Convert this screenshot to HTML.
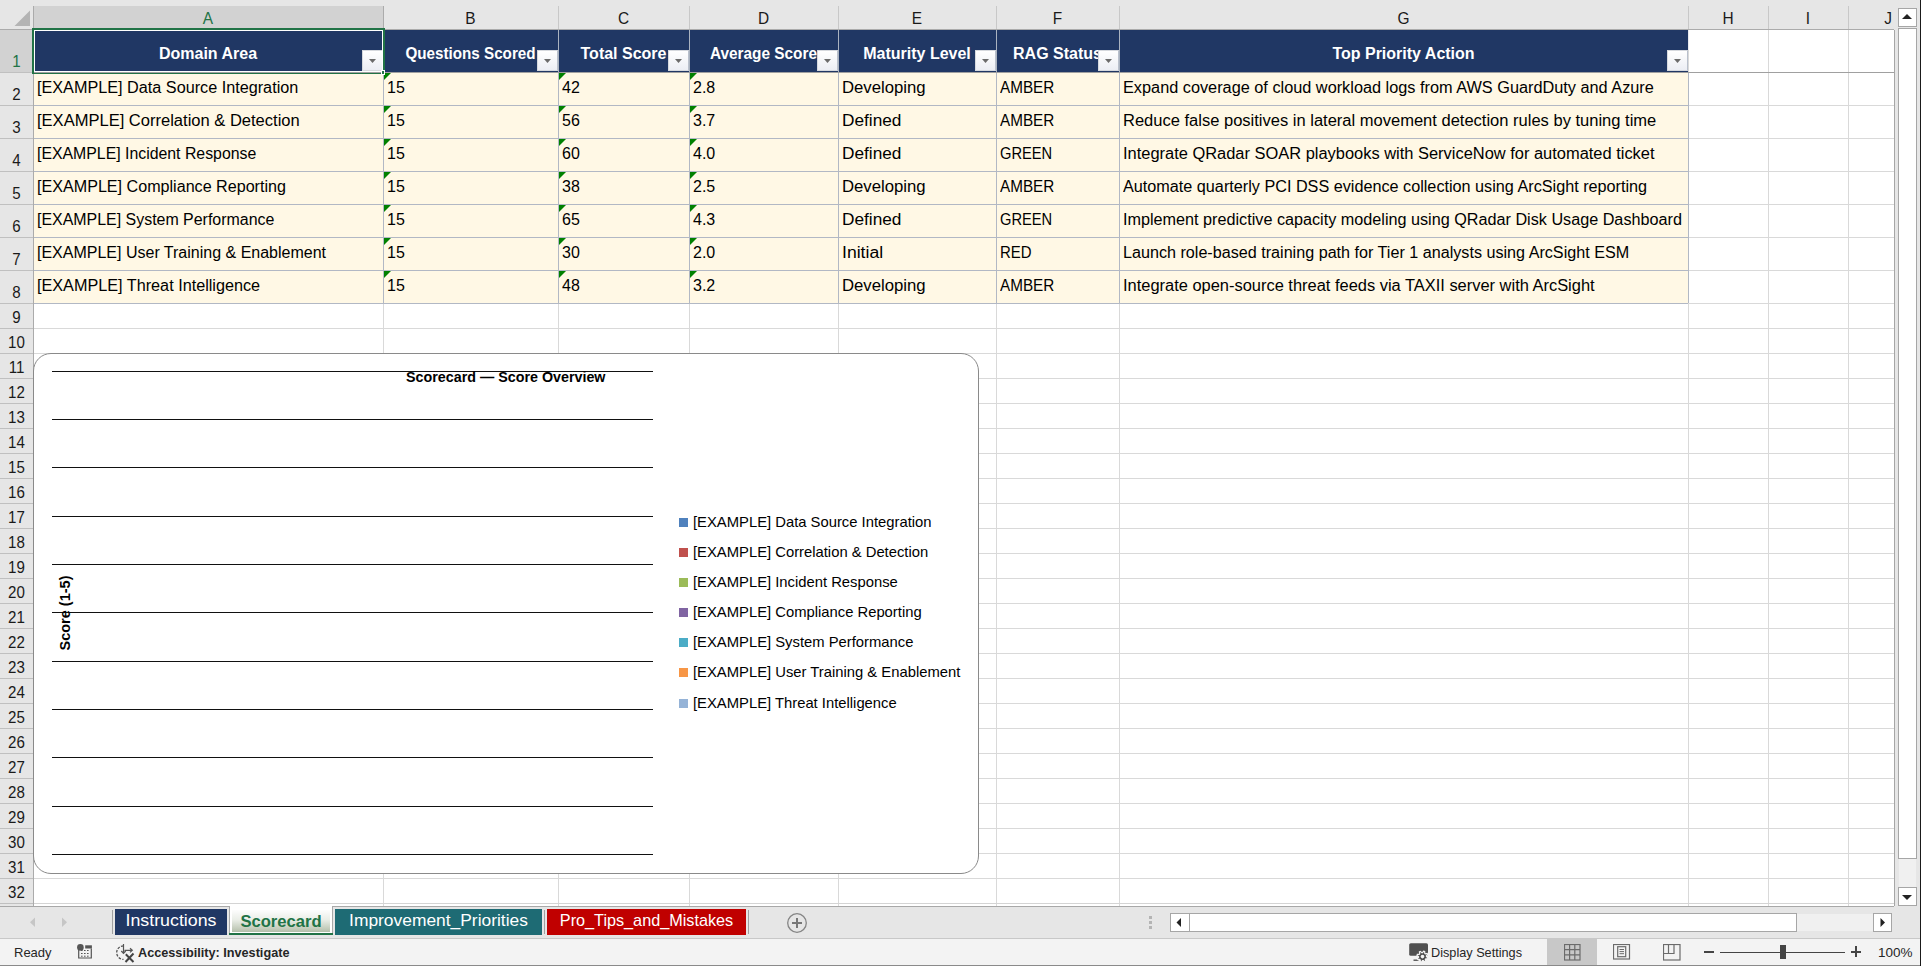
<!DOCTYPE html><html><head><meta charset="utf-8"><style>
*{margin:0;padding:0;box-sizing:border-box}
html,body{width:1921px;height:966px;overflow:hidden;background:#fff;font-family:"Liberation Sans", sans-serif;}
.a{position:absolute}
.t{position:absolute;white-space:pre;line-height:16px;}
</style></head><body>
<div class="a" style="left:383px;top:30px;width:1px;height:876px;background:#d9d9d9;"></div>
<div class="a" style="left:558px;top:30px;width:1px;height:876px;background:#d9d9d9;"></div>
<div class="a" style="left:689px;top:30px;width:1px;height:876px;background:#d9d9d9;"></div>
<div class="a" style="left:838px;top:30px;width:1px;height:876px;background:#d9d9d9;"></div>
<div class="a" style="left:996px;top:30px;width:1px;height:876px;background:#d9d9d9;"></div>
<div class="a" style="left:1119px;top:30px;width:1px;height:876px;background:#d9d9d9;"></div>
<div class="a" style="left:1688px;top:30px;width:1px;height:876px;background:#d9d9d9;"></div>
<div class="a" style="left:1768px;top:30px;width:1px;height:876px;background:#d9d9d9;"></div>
<div class="a" style="left:1848px;top:30px;width:1px;height:876px;background:#d9d9d9;"></div>
<div class="a" style="left:1894px;top:30px;width:1px;height:876px;background:#d9d9d9;"></div>
<div class="a" style="left:34px;top:105px;width:1860px;height:1px;background:#d9d9d9;"></div>
<div class="a" style="left:34px;top:138px;width:1860px;height:1px;background:#d9d9d9;"></div>
<div class="a" style="left:34px;top:171px;width:1860px;height:1px;background:#d9d9d9;"></div>
<div class="a" style="left:34px;top:204px;width:1860px;height:1px;background:#d9d9d9;"></div>
<div class="a" style="left:34px;top:237px;width:1860px;height:1px;background:#d9d9d9;"></div>
<div class="a" style="left:34px;top:270px;width:1860px;height:1px;background:#d9d9d9;"></div>
<div class="a" style="left:34px;top:303px;width:1860px;height:1px;background:#d9d9d9;"></div>
<div class="a" style="left:34px;top:328px;width:1860px;height:1px;background:#d9d9d9;"></div>
<div class="a" style="left:34px;top:353px;width:1860px;height:1px;background:#d9d9d9;"></div>
<div class="a" style="left:34px;top:378px;width:1860px;height:1px;background:#d9d9d9;"></div>
<div class="a" style="left:34px;top:403px;width:1860px;height:1px;background:#d9d9d9;"></div>
<div class="a" style="left:34px;top:428px;width:1860px;height:1px;background:#d9d9d9;"></div>
<div class="a" style="left:34px;top:453px;width:1860px;height:1px;background:#d9d9d9;"></div>
<div class="a" style="left:34px;top:478px;width:1860px;height:1px;background:#d9d9d9;"></div>
<div class="a" style="left:34px;top:503px;width:1860px;height:1px;background:#d9d9d9;"></div>
<div class="a" style="left:34px;top:528px;width:1860px;height:1px;background:#d9d9d9;"></div>
<div class="a" style="left:34px;top:553px;width:1860px;height:1px;background:#d9d9d9;"></div>
<div class="a" style="left:34px;top:578px;width:1860px;height:1px;background:#d9d9d9;"></div>
<div class="a" style="left:34px;top:603px;width:1860px;height:1px;background:#d9d9d9;"></div>
<div class="a" style="left:34px;top:628px;width:1860px;height:1px;background:#d9d9d9;"></div>
<div class="a" style="left:34px;top:653px;width:1860px;height:1px;background:#d9d9d9;"></div>
<div class="a" style="left:34px;top:678px;width:1860px;height:1px;background:#d9d9d9;"></div>
<div class="a" style="left:34px;top:703px;width:1860px;height:1px;background:#d9d9d9;"></div>
<div class="a" style="left:34px;top:728px;width:1860px;height:1px;background:#d9d9d9;"></div>
<div class="a" style="left:34px;top:753px;width:1860px;height:1px;background:#d9d9d9;"></div>
<div class="a" style="left:34px;top:778px;width:1860px;height:1px;background:#d9d9d9;"></div>
<div class="a" style="left:34px;top:803px;width:1860px;height:1px;background:#d9d9d9;"></div>
<div class="a" style="left:34px;top:828px;width:1860px;height:1px;background:#d9d9d9;"></div>
<div class="a" style="left:34px;top:853px;width:1860px;height:1px;background:#d9d9d9;"></div>
<div class="a" style="left:34px;top:878px;width:1860px;height:1px;background:#d9d9d9;"></div>
<div class="a" style="left:34px;top:903px;width:1860px;height:1px;background:#d9d9d9;"></div>
<div class="a" style="left:0px;top:0px;width:1894px;height:29px;background:#e6e6e6;"></div>
<div class="a" style="left:34px;top:6px;width:349px;height:23px;background:#d2d2d2;"></div>
<svg class="a" style="left:0;top:0" width="33" height="29"><polygon points="14.5,26 30,26 30,10.5" fill="#b4b4b4"/></svg>
<div class="a" style="left:383px;top:6px;width:1px;height:23px;background:#c8c8c8;"></div>
<div class="a" style="left:558px;top:6px;width:1px;height:23px;background:#c8c8c8;"></div>
<div class="a" style="left:689px;top:6px;width:1px;height:23px;background:#c8c8c8;"></div>
<div class="a" style="left:838px;top:6px;width:1px;height:23px;background:#c8c8c8;"></div>
<div class="a" style="left:996px;top:6px;width:1px;height:23px;background:#c8c8c8;"></div>
<div class="a" style="left:1119px;top:6px;width:1px;height:23px;background:#c8c8c8;"></div>
<div class="a" style="left:1688px;top:6px;width:1px;height:23px;background:#c8c8c8;"></div>
<div class="a" style="left:1768px;top:6px;width:1px;height:23px;background:#c8c8c8;"></div>
<div class="a" style="left:1848px;top:6px;width:1px;height:23px;background:#c8c8c8;"></div>
<div class="a" style="left:1894px;top:6px;width:1px;height:23px;background:#c8c8c8;"></div>
<div class="a" style="left:383px;top:6px;width:1px;height:23px;background:#ababab;"></div>
<div class="a" style="left:0px;top:29px;width:1894px;height:1px;background:#ababab;"></div>
<div class="t" style="left:33px;width:350px;top:11px;text-align:center;font-size:16.8px;color:#217346;transform:scaleX(0.92)">A</div>
<div class="t" style="left:383px;width:175px;top:11px;text-align:center;font-size:16.8px;color:#1a1a1a;transform:scaleX(0.92)">B</div>
<div class="t" style="left:558px;width:131px;top:11px;text-align:center;font-size:16.8px;color:#1a1a1a;transform:scaleX(0.92)">C</div>
<div class="t" style="left:689px;width:149px;top:11px;text-align:center;font-size:16.8px;color:#1a1a1a;transform:scaleX(0.92)">D</div>
<div class="t" style="left:838px;width:158px;top:11px;text-align:center;font-size:16.8px;color:#1a1a1a;transform:scaleX(0.92)">E</div>
<div class="t" style="left:996px;width:123px;top:11px;text-align:center;font-size:16.8px;color:#1a1a1a;transform:scaleX(0.92)">F</div>
<div class="t" style="left:1119px;width:569px;top:11px;text-align:center;font-size:16.8px;color:#1a1a1a;transform:scaleX(0.92)">G</div>
<div class="t" style="left:1688px;width:80px;top:11px;text-align:center;font-size:16.8px;color:#1a1a1a;transform:scaleX(0.92)">H</div>
<div class="t" style="left:1768px;width:80px;top:11px;text-align:center;font-size:16.8px;color:#1a1a1a;transform:scaleX(0.92)">I</div>
<div class="t" style="left:1848px;width:80px;top:11px;text-align:center;font-size:16.8px;color:#1a1a1a;transform:scaleX(0.92)">J</div>
<div class="a" style="left:0px;top:30px;width:33px;height:876px;background:#e6e6e6;"></div>
<div class="a" style="left:0px;top:30px;width:33px;height:42px;background:#d2d2d2;"></div>
<div class="a" style="left:33px;top:6px;width:1px;height:900px;background:#ababab;"></div>
<div class="a" style="left:0px;top:72px;width:33px;height:1px;background:#c0c0c0;"></div>
<div class="t" style="left:0;width:33px;top:54px;text-align:center;font-size:16.8px;color:#217346;transform:scaleX(0.9)">1</div>
<div class="a" style="left:0px;top:105px;width:33px;height:1px;background:#c0c0c0;"></div>
<div class="t" style="left:0;width:33px;top:87px;text-align:center;font-size:16.8px;color:#1a1a1a;transform:scaleX(0.9)">2</div>
<div class="a" style="left:0px;top:138px;width:33px;height:1px;background:#c0c0c0;"></div>
<div class="t" style="left:0;width:33px;top:120px;text-align:center;font-size:16.8px;color:#1a1a1a;transform:scaleX(0.9)">3</div>
<div class="a" style="left:0px;top:171px;width:33px;height:1px;background:#c0c0c0;"></div>
<div class="t" style="left:0;width:33px;top:153px;text-align:center;font-size:16.8px;color:#1a1a1a;transform:scaleX(0.9)">4</div>
<div class="a" style="left:0px;top:204px;width:33px;height:1px;background:#c0c0c0;"></div>
<div class="t" style="left:0;width:33px;top:186px;text-align:center;font-size:16.8px;color:#1a1a1a;transform:scaleX(0.9)">5</div>
<div class="a" style="left:0px;top:237px;width:33px;height:1px;background:#c0c0c0;"></div>
<div class="t" style="left:0;width:33px;top:219px;text-align:center;font-size:16.8px;color:#1a1a1a;transform:scaleX(0.9)">6</div>
<div class="a" style="left:0px;top:270px;width:33px;height:1px;background:#c0c0c0;"></div>
<div class="t" style="left:0;width:33px;top:252px;text-align:center;font-size:16.8px;color:#1a1a1a;transform:scaleX(0.9)">7</div>
<div class="a" style="left:0px;top:303px;width:33px;height:1px;background:#c0c0c0;"></div>
<div class="t" style="left:0;width:33px;top:285px;text-align:center;font-size:16.8px;color:#1a1a1a;transform:scaleX(0.9)">8</div>
<div class="a" style="left:0px;top:328px;width:33px;height:1px;background:#c0c0c0;"></div>
<div class="t" style="left:0;width:33px;top:310px;text-align:center;font-size:16.8px;color:#1a1a1a;transform:scaleX(0.9)">9</div>
<div class="a" style="left:0px;top:353px;width:33px;height:1px;background:#c0c0c0;"></div>
<div class="t" style="left:0;width:33px;top:335px;text-align:center;font-size:16.8px;color:#1a1a1a;transform:scaleX(0.9)">10</div>
<div class="a" style="left:0px;top:378px;width:33px;height:1px;background:#c0c0c0;"></div>
<div class="t" style="left:0;width:33px;top:360px;text-align:center;font-size:16.8px;color:#1a1a1a;transform:scaleX(0.9)">11</div>
<div class="a" style="left:0px;top:403px;width:33px;height:1px;background:#c0c0c0;"></div>
<div class="t" style="left:0;width:33px;top:385px;text-align:center;font-size:16.8px;color:#1a1a1a;transform:scaleX(0.9)">12</div>
<div class="a" style="left:0px;top:428px;width:33px;height:1px;background:#c0c0c0;"></div>
<div class="t" style="left:0;width:33px;top:410px;text-align:center;font-size:16.8px;color:#1a1a1a;transform:scaleX(0.9)">13</div>
<div class="a" style="left:0px;top:453px;width:33px;height:1px;background:#c0c0c0;"></div>
<div class="t" style="left:0;width:33px;top:435px;text-align:center;font-size:16.8px;color:#1a1a1a;transform:scaleX(0.9)">14</div>
<div class="a" style="left:0px;top:478px;width:33px;height:1px;background:#c0c0c0;"></div>
<div class="t" style="left:0;width:33px;top:460px;text-align:center;font-size:16.8px;color:#1a1a1a;transform:scaleX(0.9)">15</div>
<div class="a" style="left:0px;top:503px;width:33px;height:1px;background:#c0c0c0;"></div>
<div class="t" style="left:0;width:33px;top:485px;text-align:center;font-size:16.8px;color:#1a1a1a;transform:scaleX(0.9)">16</div>
<div class="a" style="left:0px;top:528px;width:33px;height:1px;background:#c0c0c0;"></div>
<div class="t" style="left:0;width:33px;top:510px;text-align:center;font-size:16.8px;color:#1a1a1a;transform:scaleX(0.9)">17</div>
<div class="a" style="left:0px;top:553px;width:33px;height:1px;background:#c0c0c0;"></div>
<div class="t" style="left:0;width:33px;top:535px;text-align:center;font-size:16.8px;color:#1a1a1a;transform:scaleX(0.9)">18</div>
<div class="a" style="left:0px;top:578px;width:33px;height:1px;background:#c0c0c0;"></div>
<div class="t" style="left:0;width:33px;top:560px;text-align:center;font-size:16.8px;color:#1a1a1a;transform:scaleX(0.9)">19</div>
<div class="a" style="left:0px;top:603px;width:33px;height:1px;background:#c0c0c0;"></div>
<div class="t" style="left:0;width:33px;top:585px;text-align:center;font-size:16.8px;color:#1a1a1a;transform:scaleX(0.9)">20</div>
<div class="a" style="left:0px;top:628px;width:33px;height:1px;background:#c0c0c0;"></div>
<div class="t" style="left:0;width:33px;top:610px;text-align:center;font-size:16.8px;color:#1a1a1a;transform:scaleX(0.9)">21</div>
<div class="a" style="left:0px;top:653px;width:33px;height:1px;background:#c0c0c0;"></div>
<div class="t" style="left:0;width:33px;top:635px;text-align:center;font-size:16.8px;color:#1a1a1a;transform:scaleX(0.9)">22</div>
<div class="a" style="left:0px;top:678px;width:33px;height:1px;background:#c0c0c0;"></div>
<div class="t" style="left:0;width:33px;top:660px;text-align:center;font-size:16.8px;color:#1a1a1a;transform:scaleX(0.9)">23</div>
<div class="a" style="left:0px;top:703px;width:33px;height:1px;background:#c0c0c0;"></div>
<div class="t" style="left:0;width:33px;top:685px;text-align:center;font-size:16.8px;color:#1a1a1a;transform:scaleX(0.9)">24</div>
<div class="a" style="left:0px;top:728px;width:33px;height:1px;background:#c0c0c0;"></div>
<div class="t" style="left:0;width:33px;top:710px;text-align:center;font-size:16.8px;color:#1a1a1a;transform:scaleX(0.9)">25</div>
<div class="a" style="left:0px;top:753px;width:33px;height:1px;background:#c0c0c0;"></div>
<div class="t" style="left:0;width:33px;top:735px;text-align:center;font-size:16.8px;color:#1a1a1a;transform:scaleX(0.9)">26</div>
<div class="a" style="left:0px;top:778px;width:33px;height:1px;background:#c0c0c0;"></div>
<div class="t" style="left:0;width:33px;top:760px;text-align:center;font-size:16.8px;color:#1a1a1a;transform:scaleX(0.9)">27</div>
<div class="a" style="left:0px;top:803px;width:33px;height:1px;background:#c0c0c0;"></div>
<div class="t" style="left:0;width:33px;top:785px;text-align:center;font-size:16.8px;color:#1a1a1a;transform:scaleX(0.9)">28</div>
<div class="a" style="left:0px;top:828px;width:33px;height:1px;background:#c0c0c0;"></div>
<div class="t" style="left:0;width:33px;top:810px;text-align:center;font-size:16.8px;color:#1a1a1a;transform:scaleX(0.9)">29</div>
<div class="a" style="left:0px;top:853px;width:33px;height:1px;background:#c0c0c0;"></div>
<div class="t" style="left:0;width:33px;top:835px;text-align:center;font-size:16.8px;color:#1a1a1a;transform:scaleX(0.9)">30</div>
<div class="a" style="left:0px;top:878px;width:33px;height:1px;background:#c0c0c0;"></div>
<div class="t" style="left:0;width:33px;top:860px;text-align:center;font-size:16.8px;color:#1a1a1a;transform:scaleX(0.9)">31</div>
<div class="a" style="left:0px;top:903px;width:33px;height:1px;background:#c0c0c0;"></div>
<div class="t" style="left:0;width:33px;top:885px;text-align:center;font-size:16.8px;color:#1a1a1a;transform:scaleX(0.9)">32</div>
<div class="a" style="left:34px;top:30px;width:1654px;height:42px;background:#203764;"></div>
<div class="a" style="left:558px;top:30px;width:1px;height:42px;background:#aab3c0;"></div>
<div class="a" style="left:689px;top:30px;width:1px;height:42px;background:#aab3c0;"></div>
<div class="a" style="left:838px;top:30px;width:1px;height:42px;background:#aab3c0;"></div>
<div class="a" style="left:996px;top:30px;width:1px;height:42px;background:#aab3c0;"></div>
<div class="a" style="left:1119px;top:30px;width:1px;height:42px;background:#aab3c0;"></div>
<div class="a" style="left:1688px;top:30px;width:1px;height:20px;background:#e8eaee;"></div>
<div class="a" style="left:34px;top:73px;width:1654px;height:230px;background:#fff8e5;"></div>
<div class="a" style="left:34px;top:105px;width:1654px;height:1px;background:#b2b8c4;"></div>
<div class="a" style="left:34px;top:138px;width:1654px;height:1px;background:#b2b8c4;"></div>
<div class="a" style="left:34px;top:171px;width:1654px;height:1px;background:#b2b8c4;"></div>
<div class="a" style="left:34px;top:204px;width:1654px;height:1px;background:#b2b8c4;"></div>
<div class="a" style="left:34px;top:237px;width:1654px;height:1px;background:#b2b8c4;"></div>
<div class="a" style="left:34px;top:270px;width:1654px;height:1px;background:#b2b8c4;"></div>
<div class="a" style="left:34px;top:303px;width:1654px;height:1px;background:#b2b8c4;"></div>
<div class="a" style="left:383px;top:73px;width:1px;height:230px;background:#b2b8c4;"></div>
<div class="a" style="left:558px;top:73px;width:1px;height:230px;background:#b2b8c4;"></div>
<div class="a" style="left:689px;top:73px;width:1px;height:230px;background:#b2b8c4;"></div>
<div class="a" style="left:838px;top:73px;width:1px;height:230px;background:#b2b8c4;"></div>
<div class="a" style="left:996px;top:73px;width:1px;height:230px;background:#b2b8c4;"></div>
<div class="a" style="left:1119px;top:73px;width:1px;height:230px;background:#b2b8c4;"></div>
<div class="a" style="left:1688px;top:73px;width:1px;height:230px;background:#b2b8c4;"></div>
<div class="a" style="left:34px;top:72px;width:1860px;height:1px;background:#a0a0a0;"></div>
<div class="t" style="left:33px;width:350px;top:46px;text-align:center;font-size:16px;font-weight:bold;color:#fff;transform:scaleX(1.0)">Domain Area</div>
<div class="a" style="left:362px;top:50px;width:21px;height:21px;background:linear-gradient(#ffffff,#eceef4);border:1px solid #d6d9de;border-right-color:#b9c0cc"></div>
<svg class="a" style="left:369px;top:59px" width="8" height="5"><polygon points="0,0 7,0 3.5,4" fill="#6b6b6b"/></svg>
<div class="t" style="left:383px;width:175px;top:46px;text-align:center;font-size:16px;font-weight:bold;color:#fff;transform:scaleX(0.95)">Questions Scored</div>
<div class="a" style="left:537px;top:50px;width:21px;height:21px;background:linear-gradient(#ffffff,#eceef4);border:1px solid #d6d9de;border-right-color:#b9c0cc"></div>
<svg class="a" style="left:544px;top:59px" width="8" height="5"><polygon points="0,0 7,0 3.5,4" fill="#6b6b6b"/></svg>
<div class="t" style="left:558px;width:131px;top:46px;text-align:center;font-size:16px;font-weight:bold;color:#fff;transform:scaleX(1.0)">Total Score</div>
<div class="a" style="left:668px;top:50px;width:21px;height:21px;background:linear-gradient(#ffffff,#eceef4);border:1px solid #d6d9de;border-right-color:#b9c0cc"></div>
<svg class="a" style="left:675px;top:59px" width="8" height="5"><polygon points="0,0 7,0 3.5,4" fill="#6b6b6b"/></svg>
<div class="t" style="left:689px;width:149px;top:46px;text-align:center;font-size:16px;font-weight:bold;color:#fff;transform:scaleX(0.96)">Average Score</div>
<div class="a" style="left:817px;top:50px;width:21px;height:21px;background:linear-gradient(#ffffff,#eceef4);border:1px solid #d6d9de;border-right-color:#b9c0cc"></div>
<svg class="a" style="left:824px;top:59px" width="8" height="5"><polygon points="0,0 7,0 3.5,4" fill="#6b6b6b"/></svg>
<div class="t" style="left:838px;width:158px;top:46px;text-align:center;font-size:16px;font-weight:bold;color:#fff;transform:scaleX(1.0)">Maturity Level</div>
<div class="a" style="left:975px;top:50px;width:21px;height:21px;background:linear-gradient(#ffffff,#eceef4);border:1px solid #d6d9de;border-right-color:#b9c0cc"></div>
<svg class="a" style="left:982px;top:59px" width="8" height="5"><polygon points="0,0 7,0 3.5,4" fill="#6b6b6b"/></svg>
<div class="t" style="left:996px;width:123px;top:46px;text-align:center;font-size:16px;font-weight:bold;color:#fff;transform:scaleX(1.0)">RAG Status</div>
<div class="a" style="left:1098px;top:50px;width:21px;height:21px;background:linear-gradient(#ffffff,#eceef4);border:1px solid #d6d9de;border-right-color:#b9c0cc"></div>
<svg class="a" style="left:1105px;top:59px" width="8" height="5"><polygon points="0,0 7,0 3.5,4" fill="#6b6b6b"/></svg>
<div class="t" style="left:1119px;width:569px;top:46px;text-align:center;font-size:16px;font-weight:bold;color:#fff;transform:scaleX(1.0)">Top Priority Action</div>
<div class="a" style="left:1667px;top:50px;width:21px;height:21px;background:linear-gradient(#ffffff,#eceef4);border:1px solid #d6d9de;border-right-color:#b9c0cc"></div>
<svg class="a" style="left:1674px;top:59px" width="8" height="5"><polygon points="0,0 7,0 3.5,4" fill="#6b6b6b"/></svg>
<div class="t" style="left:37px;top:80px;font-size:16px;color:#000;font-weight:normal;transform:scaleX(1.013);transform-origin:0 0">[EXAMPLE] Data Source Integration</div>
<div class="t" style="left:387px;top:80px;font-size:16px;color:#000;font-weight:normal;">15</div>
<div class="t" style="left:562px;top:80px;font-size:16px;color:#000;font-weight:normal;">42</div>
<div class="t" style="left:693px;top:80px;font-size:16px;color:#000;font-weight:normal;">2.8</div>
<div class="t" style="left:842px;top:80px;font-size:16px;color:#000;font-weight:normal;transform:scaleX(1.045);transform-origin:0 0">Developing</div>
<div class="t" style="left:1000px;top:80px;font-size:16px;color:#000;font-weight:normal;transform:scaleX(0.955);transform-origin:0 0">AMBER</div>
<div class="t" style="left:1123px;top:80px;font-size:16px;color:#000;font-weight:normal;transform:scaleX(1.018);transform-origin:0 0">Expand coverage of cloud workload logs from AWS GuardDuty and Azure</div>
<svg class="a" style="left:384px;top:73px" width="8" height="8"><polygon points="0,0 7,0 0,7" fill="#008000"/></svg>
<svg class="a" style="left:559px;top:73px" width="8" height="8"><polygon points="0,0 7,0 0,7" fill="#008000"/></svg>
<svg class="a" style="left:690px;top:73px" width="8" height="8"><polygon points="0,0 7,0 0,7" fill="#008000"/></svg>
<div class="t" style="left:37px;top:113px;font-size:16px;color:#000;font-weight:normal;transform:scaleX(1.033);transform-origin:0 0">[EXAMPLE] Correlation &amp; Detection</div>
<div class="t" style="left:387px;top:113px;font-size:16px;color:#000;font-weight:normal;">15</div>
<div class="t" style="left:562px;top:113px;font-size:16px;color:#000;font-weight:normal;">56</div>
<div class="t" style="left:693px;top:113px;font-size:16px;color:#000;font-weight:normal;">3.7</div>
<div class="t" style="left:842px;top:113px;font-size:16px;color:#000;font-weight:normal;transform:scaleX(1.077);transform-origin:0 0">Defined</div>
<div class="t" style="left:1000px;top:113px;font-size:16px;color:#000;font-weight:normal;transform:scaleX(0.955);transform-origin:0 0">AMBER</div>
<div class="t" style="left:1123px;top:113px;font-size:16px;color:#000;font-weight:normal;transform:scaleX(1.032);transform-origin:0 0">Reduce false positives in lateral movement detection rules by tuning time</div>
<svg class="a" style="left:384px;top:106px" width="8" height="8"><polygon points="0,0 7,0 0,7" fill="#008000"/></svg>
<svg class="a" style="left:559px;top:106px" width="8" height="8"><polygon points="0,0 7,0 0,7" fill="#008000"/></svg>
<svg class="a" style="left:690px;top:106px" width="8" height="8"><polygon points="0,0 7,0 0,7" fill="#008000"/></svg>
<div class="t" style="left:37px;top:146px;font-size:16px;color:#000;font-weight:normal;transform:scaleX(0.99);transform-origin:0 0">[EXAMPLE] Incident Response</div>
<div class="t" style="left:387px;top:146px;font-size:16px;color:#000;font-weight:normal;">15</div>
<div class="t" style="left:562px;top:146px;font-size:16px;color:#000;font-weight:normal;">60</div>
<div class="t" style="left:693px;top:146px;font-size:16px;color:#000;font-weight:normal;">4.0</div>
<div class="t" style="left:842px;top:146px;font-size:16px;color:#000;font-weight:normal;transform:scaleX(1.077);transform-origin:0 0">Defined</div>
<div class="t" style="left:1000px;top:146px;font-size:16px;color:#000;font-weight:normal;transform:scaleX(0.917);transform-origin:0 0">GREEN</div>
<div class="t" style="left:1123px;top:146px;font-size:16px;color:#000;font-weight:normal;transform:scaleX(1.027);transform-origin:0 0">Integrate QRadar SOAR playbooks with ServiceNow for automated ticket</div>
<svg class="a" style="left:384px;top:139px" width="8" height="8"><polygon points="0,0 7,0 0,7" fill="#008000"/></svg>
<svg class="a" style="left:559px;top:139px" width="8" height="8"><polygon points="0,0 7,0 0,7" fill="#008000"/></svg>
<svg class="a" style="left:690px;top:139px" width="8" height="8"><polygon points="0,0 7,0 0,7" fill="#008000"/></svg>
<div class="t" style="left:37px;top:179px;font-size:16px;color:#000;font-weight:normal;transform:scaleX(1.007);transform-origin:0 0">[EXAMPLE] Compliance Reporting</div>
<div class="t" style="left:387px;top:179px;font-size:16px;color:#000;font-weight:normal;">15</div>
<div class="t" style="left:562px;top:179px;font-size:16px;color:#000;font-weight:normal;">38</div>
<div class="t" style="left:693px;top:179px;font-size:16px;color:#000;font-weight:normal;">2.5</div>
<div class="t" style="left:842px;top:179px;font-size:16px;color:#000;font-weight:normal;transform:scaleX(1.045);transform-origin:0 0">Developing</div>
<div class="t" style="left:1000px;top:179px;font-size:16px;color:#000;font-weight:normal;transform:scaleX(0.955);transform-origin:0 0">AMBER</div>
<div class="t" style="left:1123px;top:179px;font-size:16px;color:#000;font-weight:normal;transform:scaleX(1.0126);transform-origin:0 0">Automate quarterly PCI DSS evidence collection using ArcSight reporting</div>
<svg class="a" style="left:384px;top:172px" width="8" height="8"><polygon points="0,0 7,0 0,7" fill="#008000"/></svg>
<svg class="a" style="left:559px;top:172px" width="8" height="8"><polygon points="0,0 7,0 0,7" fill="#008000"/></svg>
<svg class="a" style="left:690px;top:172px" width="8" height="8"><polygon points="0,0 7,0 0,7" fill="#008000"/></svg>
<div class="t" style="left:37px;top:212px;font-size:16px;color:#000;font-weight:normal;transform:scaleX(0.996);transform-origin:0 0">[EXAMPLE] System Performance</div>
<div class="t" style="left:387px;top:212px;font-size:16px;color:#000;font-weight:normal;">15</div>
<div class="t" style="left:562px;top:212px;font-size:16px;color:#000;font-weight:normal;">65</div>
<div class="t" style="left:693px;top:212px;font-size:16px;color:#000;font-weight:normal;">4.3</div>
<div class="t" style="left:842px;top:212px;font-size:16px;color:#000;font-weight:normal;transform:scaleX(1.077);transform-origin:0 0">Defined</div>
<div class="t" style="left:1000px;top:212px;font-size:16px;color:#000;font-weight:normal;transform:scaleX(0.917);transform-origin:0 0">GREEN</div>
<div class="t" style="left:1123px;top:212px;font-size:16px;color:#000;font-weight:normal;transform:scaleX(1.012);transform-origin:0 0">Implement predictive capacity modeling using QRadar Disk Usage Dashboard</div>
<svg class="a" style="left:384px;top:205px" width="8" height="8"><polygon points="0,0 7,0 0,7" fill="#008000"/></svg>
<svg class="a" style="left:559px;top:205px" width="8" height="8"><polygon points="0,0 7,0 0,7" fill="#008000"/></svg>
<svg class="a" style="left:690px;top:205px" width="8" height="8"><polygon points="0,0 7,0 0,7" fill="#008000"/></svg>
<div class="t" style="left:37px;top:245px;font-size:16px;color:#000;font-weight:normal;">[EXAMPLE] User Training &amp; Enablement</div>
<div class="t" style="left:387px;top:245px;font-size:16px;color:#000;font-weight:normal;">15</div>
<div class="t" style="left:562px;top:245px;font-size:16px;color:#000;font-weight:normal;">30</div>
<div class="t" style="left:693px;top:245px;font-size:16px;color:#000;font-weight:normal;">2.0</div>
<div class="t" style="left:842px;top:245px;font-size:16px;color:#000;font-weight:normal;transform:scaleX(1.1);transform-origin:0 0">Initial</div>
<div class="t" style="left:1000px;top:245px;font-size:16px;color:#000;font-weight:normal;transform:scaleX(0.935);transform-origin:0 0">RED</div>
<div class="t" style="left:1123px;top:245px;font-size:16px;color:#000;font-weight:normal;transform:scaleX(1.009);transform-origin:0 0">Launch role-based training path for Tier 1 analysts using ArcSight ESM</div>
<svg class="a" style="left:384px;top:238px" width="8" height="8"><polygon points="0,0 7,0 0,7" fill="#008000"/></svg>
<svg class="a" style="left:559px;top:238px" width="8" height="8"><polygon points="0,0 7,0 0,7" fill="#008000"/></svg>
<svg class="a" style="left:690px;top:238px" width="8" height="8"><polygon points="0,0 7,0 0,7" fill="#008000"/></svg>
<div class="t" style="left:37px;top:278px;font-size:16px;color:#000;font-weight:normal;transform:scaleX(1.013);transform-origin:0 0">[EXAMPLE] Threat Intelligence</div>
<div class="t" style="left:387px;top:278px;font-size:16px;color:#000;font-weight:normal;">15</div>
<div class="t" style="left:562px;top:278px;font-size:16px;color:#000;font-weight:normal;">48</div>
<div class="t" style="left:693px;top:278px;font-size:16px;color:#000;font-weight:normal;">3.2</div>
<div class="t" style="left:842px;top:278px;font-size:16px;color:#000;font-weight:normal;transform:scaleX(1.045);transform-origin:0 0">Developing</div>
<div class="t" style="left:1000px;top:278px;font-size:16px;color:#000;font-weight:normal;transform:scaleX(0.955);transform-origin:0 0">AMBER</div>
<div class="t" style="left:1123px;top:278px;font-size:16px;color:#000;font-weight:normal;transform:scaleX(1.027);transform-origin:0 0">Integrate open-source threat feeds via TAXII server with ArcSight</div>
<svg class="a" style="left:384px;top:271px" width="8" height="8"><polygon points="0,0 7,0 0,7" fill="#008000"/></svg>
<svg class="a" style="left:559px;top:271px" width="8" height="8"><polygon points="0,0 7,0 0,7" fill="#008000"/></svg>
<svg class="a" style="left:690px;top:271px" width="8" height="8"><polygon points="0,0 7,0 0,7" fill="#008000"/></svg>
<div class="a" style="left:32px;top:28px;width:353px;height:2px;background:#217346;"></div>
<div class="a" style="left:32px;top:28px;width:2px;height:46px;background:#217346;"></div>
<div class="a" style="left:383px;top:28px;width:2px;height:44px;background:#217346;"></div>
<div class="a" style="left:32px;top:73px;width:350px;height:1px;background:#217346;"></div>
<div class="a" style="left:34px;top:30px;width:1px;height:41px;background:#fff;"></div>
<div class="a" style="left:34px;top:30px;width:349px;height:1px;background:#fff;"></div>
<div class="a" style="left:34px;top:71px;width:348px;height:1px;background:#fff;"></div>
<div class="a" style="left:382px;top:30px;width:1px;height:41px;background:#fff;"></div>
<div class="a" style="left:381px;top:70px;width:4px;height:5px;background:#217346;border:1px solid #fff"></div>
<div class="a" style="left:33px;top:353px;width:946px;height:521px;background:#fff;border:1px solid #8a8a8a;border-radius:18px"></div>
<div class="a" style="left:52px;top:371px;width:601px;height:1px;background:#111;"></div>
<div class="a" style="left:52px;top:419px;width:601px;height:1px;background:#111;"></div>
<div class="a" style="left:52px;top:467px;width:601px;height:1px;background:#111;"></div>
<div class="a" style="left:52px;top:516px;width:601px;height:1px;background:#111;"></div>
<div class="a" style="left:52px;top:564px;width:601px;height:1px;background:#111;"></div>
<div class="a" style="left:52px;top:612px;width:601px;height:1px;background:#111;"></div>
<div class="a" style="left:52px;top:661px;width:601px;height:1px;background:#111;"></div>
<div class="a" style="left:52px;top:709px;width:601px;height:1px;background:#111;"></div>
<div class="a" style="left:52px;top:757px;width:601px;height:1px;background:#111;"></div>
<div class="a" style="left:52px;top:806px;width:601px;height:1px;background:#111;"></div>
<div class="a" style="left:52px;top:854px;width:601px;height:1px;background:#111;"></div>
<div class="t" style="left:406px;top:369px;font-size:14.3px;color:#000;font-weight:bold;">Scorecard — Score Overview</div>
<div class="t" style="left:65px;top:613px;font-size:14.5px;font-weight:bold;color:#000;transform:translate(-50%,-50%) rotate(-90deg);transform-origin:center">Score (1-5)</div>
<div class="a" style="left:679px;top:518px;width:9px;height:9px;background:#4f81bd;"></div>
<div class="t" style="left:693px;top:514px;font-size:14.8px;color:#000;font-weight:normal;">[EXAMPLE] Data Source Integration</div>
<div class="a" style="left:679px;top:548px;width:9px;height:9px;background:#c0504d;"></div>
<div class="t" style="left:693px;top:544px;font-size:14.8px;color:#000;font-weight:normal;">[EXAMPLE] Correlation &amp; Detection</div>
<div class="a" style="left:679px;top:578px;width:9px;height:9px;background:#9bbb59;"></div>
<div class="t" style="left:693px;top:574px;font-size:14.8px;color:#000;font-weight:normal;">[EXAMPLE] Incident Response</div>
<div class="a" style="left:679px;top:608px;width:9px;height:9px;background:#8064a2;"></div>
<div class="t" style="left:693px;top:604px;font-size:14.8px;color:#000;font-weight:normal;">[EXAMPLE] Compliance Reporting</div>
<div class="a" style="left:679px;top:638px;width:9px;height:9px;background:#4bacc6;"></div>
<div class="t" style="left:693px;top:634px;font-size:14.8px;color:#000;font-weight:normal;">[EXAMPLE] System Performance</div>
<div class="a" style="left:679px;top:668px;width:9px;height:9px;background:#f79646;"></div>
<div class="t" style="left:693px;top:664px;font-size:14.8px;color:#000;font-weight:normal;">[EXAMPLE] User Training &amp; Enablement</div>
<div class="a" style="left:679px;top:699px;width:9px;height:9px;background:#95b3d7;"></div>
<div class="t" style="left:693px;top:695px;font-size:14.8px;color:#000;font-weight:normal;">[EXAMPLE] Threat Intelligence</div>
<div class="a" style="left:0px;top:903px;width:1894px;height:1px;background:#d4d4d4;"></div>
<div class="a" style="left:0px;top:906px;width:1894px;height:1px;background:#a8a8a8;"></div>
<div class="a" style="left:0px;top:907px;width:1921px;height:31px;background:#e6e6e6;"></div>
<div class="a" style="left:0px;top:938px;width:1921px;height:1px;background:#c8c8c8;"></div>
<div class="a" style="left:0px;top:939px;width:1920px;height:27px;background:#f3f3f3;"></div>
<div class="a" style="left:0px;top:903px;width:33px;height:3px;background:#e6e6e6;"></div>
<div class="a" style="left:0px;top:903px;width:33px;height:1px;background:#c0c0c0;"></div>
<div class="a" style="left:33px;top:903px;width:1px;height:3px;background:#ababab;"></div>
<svg class="a" style="left:29px;top:917px" width="8" height="11"><polygon points="6,0.5 6,10 1,5.25" fill="#c6c6c6"/></svg>
<svg class="a" style="left:61px;top:917px" width="8" height="11"><polygon points="1,0.5 1,10 6,5.25" fill="#c6c6c6"/></svg>
<div class="a" style="left:112px;top:910px;width:1px;height:24px;background:#a0a0a0;"></div>
<div class="a" style="left:115px;top:909px;width:112px;height:26px;background:#203764;"></div>
<div class="t" style="left:115px;width:112px;top:913px;text-align:center;font-size:17px;color:#fff;transform:scaleX(1.047)">Instructions</div>
<div class="a" style="left:335px;top:909px;width:207px;height:26px;background:#1e6b74;"></div>
<div class="t" style="left:335px;width:207px;top:913px;text-align:center;font-size:16.6px;color:#fff;transform:scaleX(1.048)">Improvement_Priorities</div>
<div class="a" style="left:547px;top:909px;width:199px;height:26px;background:#c00000;"></div>
<div class="t" style="left:547px;width:199px;top:913px;text-align:center;font-size:16.6px;color:#fff;transform:scaleX(0.977)">Pro_Tips_and_Mistakes</div>
<div class="a" style="left:229px;top:906px;width:1px;height:29px;background:#a8a8a8;"></div>
<div class="a" style="left:230px;top:906px;width:102px;height:28px;background:#fff;"></div>
<div class="a" style="left:332px;top:906px;width:1px;height:29px;background:#a8a8a8;"></div>
<div class="a" style="left:232px;top:910px;width:98px;height:22px;background:linear-gradient(#fdfdfd 0%,#e9ede6 45%,#b4bfaa 100%)"></div>
<div class="a" style="left:229px;top:933px;width:104px;height:2px;background:#217346;"></div>
<div class="t" style="left:230px;width:102px;top:913px;text-align:center;font-size:16.3px;font-weight:bold;color:#217346;transform:scaleX(1.02)">Scorecard</div>
<div class="a" style="left:544px;top:910px;width:1px;height:24px;background:#a0a0a0;"></div>
<div class="a" style="left:748px;top:910px;width:1px;height:24px;background:#a0a0a0;"></div>
<svg class="a" style="left:786px;top:912px" width="22" height="22"><circle cx="11" cy="11" r="9.3" fill="none" stroke="#858585" stroke-width="1.3"/><path d="M11 6V16M6 11H16" stroke="#777" stroke-width="2"/></svg>
<svg class="a" style="left:1148px;top:915px" width="6" height="16"><rect x="1" y="1" width="3" height="3" fill="#b4b4b4"/><rect x="1" y="6" width="3" height="3" fill="#b4b4b4"/><rect x="1" y="11" width="3" height="3" fill="#b4b4b4"/></svg>
<div class="a" style="left:1170px;top:913px;width:20px;height:19px;background:#fff;border:1px solid #a6a6a6"></div>
<svg class="a" style="left:1175px;top:917px" width="8" height="12"><polygon points="6,1 6,10 1.5,5.5" fill="#222"/></svg>
<div class="a" style="left:1189px;top:913px;width:608px;height:19px;background:#fff;border:1px solid #a6a6a6"></div>
<div class="a" style="left:1797px;top:914px;width:76px;height:17px;background:#f0f0f0;"></div>
<div class="a" style="left:1873px;top:913px;width:19px;height:19px;background:#fff;border:1px solid #a6a6a6"></div>
<svg class="a" style="left:1879px;top:917px" width="8" height="12"><polygon points="1.5,1 1.5,10 6,5.5" fill="#222"/></svg>
<div class="a" style="left:1894px;top:0px;width:27px;height:907px;background:#e6e6e6;"></div>
<div class="a" style="left:1894px;top:30px;width:1px;height:876px;background:#a6a6a6;"></div>
<div class="a" style="left:1898px;top:8px;width:19px;height:19px;background:#fff;border:1px solid #a6a6a6"></div>
<svg class="a" style="left:1901px;top:13px" width="13" height="8"><polygon points="1,6 11,6 6,1" fill="#222"/></svg>
<div class="a" style="left:1898px;top:28px;width:19px;height:831px;background:#fff;border:1px solid #a6a6a6"></div>
<div class="a" style="left:1899px;top:859px;width:17px;height:28px;background:#f0f0f0;"></div>
<div class="a" style="left:1898px;top:887px;width:19px;height:19px;background:#fff;border:1px solid #a6a6a6"></div>
<svg class="a" style="left:1901px;top:894px" width="13" height="8"><polygon points="1,1 11,1 6,6" fill="#222"/></svg>
<div class="a" style="left:1920px;top:0px;width:1px;height:966px;background:#1a1a1a;"></div>
<div class="t" style="left:14px;top:945px;font-size:13px;color:#262626;font-weight:normal;">Ready</div>
<svg class="a" style="left:76px;top:943px" width="18" height="18"><circle cx="4.4" cy="4.4" r="3.3" fill="#555"/><rect x="9.2" y="2.3" width="6.7" height="3.2" fill="#555"/><path d="M2.7 6.2V15H15.3V5.4" fill="none" stroke="#555" stroke-width="1.2"/><path d="M5 7.5h1.6M8 7.5h1.6M11 7.5h1.6M5 10.5h1.6M8 10.5h1.6M11 10.5h1.6M5 13.2h1.6M8 13.2h1.6M11 13.2h1.6" stroke="#555" stroke-width="1"/></svg>
<svg class="a" style="left:113px;top:942px" width="24" height="22"><path d="M10.5 3.8A6.8 6.8 0 0 0 10.5 17.4" fill="none" stroke="#555" stroke-width="1.3" stroke-dasharray="2.6 1.4"/><path d="M10.5 2v9.5M8.3 9L10.5 11.3 12.7 9M11.5 8.3h8M17 6.2l2.3 2.1-2.3 2.1" fill="none" stroke="#555" stroke-width="1.2"/><path d="M12.5 20L20.5 11.5M12.8 12.2L20.5 20" stroke="#444" stroke-width="2"/></svg>
<div class="t" style="left:138px;top:945px;font-size:13px;color:#262626;font-weight:bold;transform:scaleX(0.975);transform-origin:0 0">Accessibility: Investigate</div>
<svg class="a" style="left:1409px;top:942px" width="22" height="22"><rect x="0.2" y="1.2" width="18.8" height="12.6" rx="1.6" fill="#505050"/><path d="M4.5 18.2H9.5" stroke="#505050" stroke-width="1.4"/><polygon points="18.99,15.71 18.67,16.76 16.82,16.83 16.32,17.44 16.59,19.27 15.62,19.78 14.27,18.53 13.49,18.60 12.39,20.09 11.34,19.77 11.27,17.92 10.66,17.42 8.83,17.69 8.32,16.72 9.57,15.37 9.50,14.59 8.01,13.49 8.33,12.44 10.18,12.37 10.68,11.76 10.41,9.93 11.38,9.42 12.73,10.67 13.51,10.60 14.61,9.11 15.66,9.43 15.73,11.28 16.34,11.78 18.17,11.51 18.68,12.48 17.43,13.83 17.50,14.61" fill="#505050" stroke="#f3f3f3" stroke-width="1.2"/><circle cx="13.5" cy="14.6" r="1.8" fill="#f3f3f3"/></svg>
<div class="t" style="left:1431px;top:945px;font-size:13.5px;color:#262626;font-weight:normal;transform:scaleX(0.94);transform-origin:0 0">Display Settings</div>
<div class="a" style="left:1547px;top:939px;width:50px;height:27px;background:#c8c8c8;"></div>
<svg class="a" style="left:1564px;top:944px" width="17" height="17"><rect x="0.5" y="0.5" width="15.5" height="15.5" fill="none" stroke="#6b6b6b" stroke-width="1.2"/><path d="M0.5 5.6h15.5M0.5 10.8h15.5M5.6 0.5v15.5M10.8 0.5v15.5" stroke="#6b6b6b" stroke-width="1.2" fill="none"/></svg>
<svg class="a" style="left:1613px;top:944px" width="18" height="16"><rect x="0.5" y="0.5" width="16" height="14.5" fill="none" stroke="#6b6b6b" stroke-width="1.2"/><rect x="4.7" y="2.7" width="8" height="10" fill="none" stroke="#6b6b6b" stroke-width="1.2"/><path d="M6.5 5.5h4.5M6.5 7.6h4.5M6.5 9.7h4.5" stroke="#6b6b6b" stroke-width="1" fill="none"/></svg>
<svg class="a" style="left:1663px;top:944px" width="18" height="17"><rect x="0.5" y="0.5" width="16.5" height="15.5" fill="none" stroke="#6b6b6b" stroke-width="1.2"/><path d="M5.5 0.5v9h5.5V0.5M0.5 9.5h10.5" stroke="#6b6b6b" stroke-width="1.2" fill="none"/></svg>
<div class="a" style="left:1704px;top:951px;width:10px;height:1.5px;background:#444;"></div>
<div class="a" style="left:1720px;top:952px;width:125px;height:1px;background:#444;"></div>
<div class="a" style="left:1780px;top:945px;width:6px;height:14px;background:#444;"></div>
<div class="a" style="left:1851px;top:951px;width:10px;height:1.5px;background:#444;"></div>
<div class="a" style="left:1855px;top:946px;width:1.5px;height:11px;background:#444;"></div>
<div class="t" style="left:1878px;top:945px;font-size:13.5px;color:#262626;font-weight:normal;">100%</div>
<div class="a" style="left:0px;top:965px;width:1920px;height:1px;background:#8a8a8a;"></div>
</body></html>
